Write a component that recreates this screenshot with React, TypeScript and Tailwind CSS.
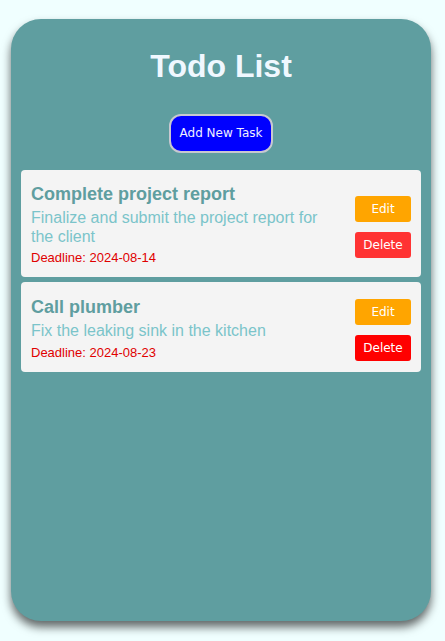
import React from "react";

type Task = {
  id: number;
  title: string;
  description: string;
  deadline: string;
  deleteColor: string;
};

const TASKS: Task[] = [
  {
    id: 1,
    title: "Complete project report",
    description: "Finalize and submit the project report for the client",
    deadline: "2024-08-14",
    deleteColor: "bg-[#ff3333]",
  },
  {
    id: 2,
    title: "Call plumber",
    description: "Fix the leaking sink in the kitchen",
    deadline: "2024-08-23",
    deleteColor: "bg-[#ff0000]",
  },
];

function TaskCard({ task }: { task: Task }) {
  return (
    <div className="flex items-center rounded-[4px] bg-[#f4f4f4] pl-[10px] pr-[10px] pt-[14px] pb-[11px]">
      <div className="min-w-0 flex-1 max-w-[300px]">
        <h3 className="text-[18px] font-bold leading-[1.15] text-[#5f9ea0]">{task.title}</h3>
        <p className="mt-[5px] text-[16px] leading-[1.15] text-[#7bc4ca]">{task.description}</p>
        <p className="mt-[5px] text-[13px] leading-[1.15] text-[#e00000]">Deadline: {task.deadline}</p>
      </div>
      <div className="ml-auto flex flex-col gap-[10px] pt-[3px] font-['DejaVu_Sans',sans-serif]">
        <button className="h-[26px] w-[56px] rounded-[3px] bg-[#ffa500] text-[12px] text-white">
          Edit
        </button>
        <button className={`h-[26px] w-[56px] rounded-[3px] ${task.deleteColor} text-[12px] text-white`}>
          Delete
        </button>
      </div>
    </div>
  );
}

export default function App() {
  return (
    <div className="min-h-[641px] bg-[#f0ffff] pt-[19px] font-['Liberation_Sans',Arial,sans-serif]">
      <div className="ml-[11px] h-[602px] w-[420px] rounded-[30px] bg-[#5f9ea0] px-[10px] pt-[29px] shadow-[0_6px_10px_rgba(0,0,0,0.6)]">
        <h1 className="text-center text-[32px] font-bold leading-[1.15] text-[#f0f8ff]">Todo List</h1>
        <div className="mt-[29px] flex justify-center">
          <button className="h-[39px] w-[104px] rounded-[12px] border-2 border-[#c8c8d0] bg-[#0000ff] font-['DejaVu_Sans',sans-serif] text-[12px] text-[#f0f0ff]">
            Add New Task
          </button>
        </div>
        <div className="mt-[17px] flex flex-col gap-[5px]">
          {TASKS.map((t) => (
            <TaskCard key={t.id} task={t} />
          ))}
        </div>
      </div>
    </div>
  );
}
